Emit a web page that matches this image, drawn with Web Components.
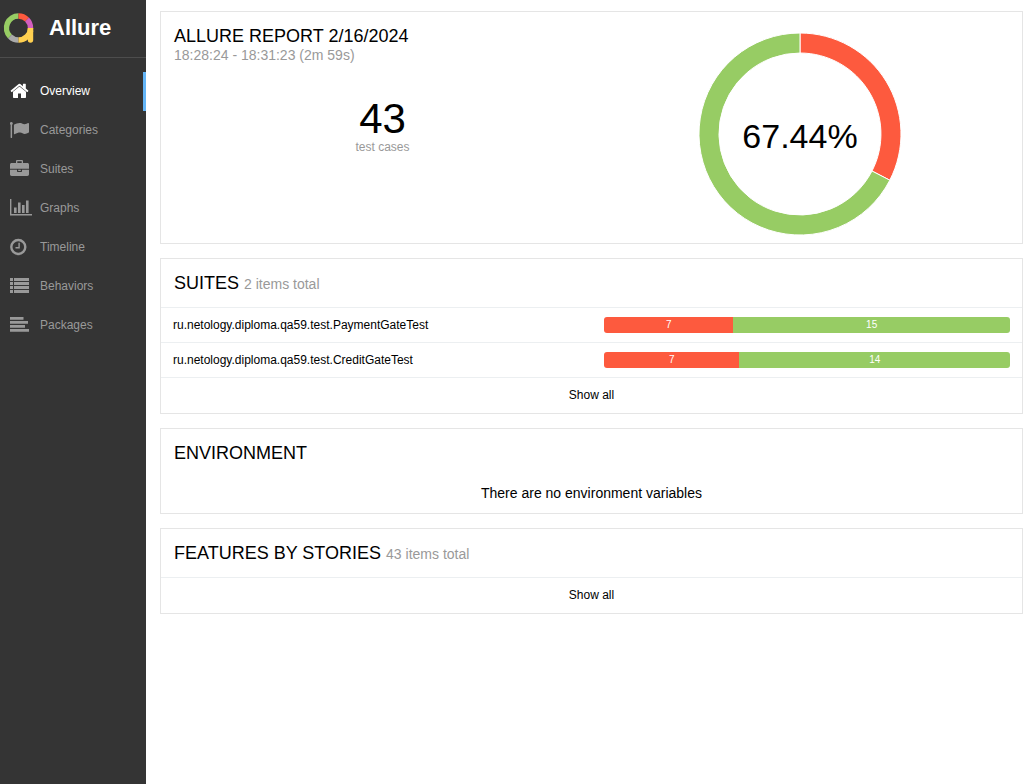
<!DOCTYPE html>
<html lang="en">
<head>
<meta charset="utf-8">
<title>Allure Report</title>
<style>
  html, body { margin: 0; }
  body { font-family: "Liberation Sans", Arial, sans-serif; font-size: 14px; color: #000; background: #fff; }
</style>
</head>
<body>
<allure-app></allure-app>

<script>
const ICONS = {
  home: '<path fill="currentColor" d="M3 9.7V15.2c0 .4.3.7.7.7H8V11.5h3v4.400h4.300c.4 0 .7-.3.7-.7V9.700L9.500 4.400zM18.200 8.600 15.800 6.600V2.200c0-.2-.2-.4-.4-.4h-2.100c-.2 0-.4.200-.4.400v2.100L10.300 2.100a1.300 1.300 0 0 0-1.600 0L.8 8.600c-.2.100-.2.400-.1.500l.7.900c.1.200.4.200.6 0l7.500-6.200 7.500 6.200c.2.200.4.100.6 0l.7-.9c.1-.1.100-.4-.1-.5z"/>',
  flag: '<path fill="currentColor" d="M2.800 2.500a1.500 1.500 0 0 1-.7 1.300V16.500c0 .2-.2.400-.4.400H1c-.2 0-.4-.2-.4-.4V3.800A1.500 1.500 0 1 1 2.800 2.500zM19 2.600v8.500c0 .4-.3.500-.6.700-1.100.6-2.300 1.100-3.600 1.100-1.800 0-2.700-1.400-4.800-1.400-1.600 0-3.600.7-5 1.500-.6.400-1.100.2-1.100-.4V4.300c0-.3.200-.5.400-.7C5.600 2.800 7.700 1.900 9.500 1.900c1.500 0 2.700.5 4 1.100.3.200.7.200 1 .2 1.300 0 3-1.300 3.700-1.300.4 0 .8.300.8.700z"/>',
  briefcase: '<path fill="currentColor" fill-rule="evenodd" d="M6 3V1.200C6 .4 6.500 0 7.200 0h4.600c.7 0 1.200.4 1.200 1.200V3h4.300c1 0 1.700.7 1.700 1.700v4.100H0V4.700C0 3.700.7 3 1.700 3zM7.300 3h4.400V1.300H7.300zM0 9.700h7v1.600c0 .4.300.7.700.7h3.600c.4 0 .7-.3.700-.7V9.700h7v4.600c0 1-.7 1.700-1.700 1.700H1.700C.7 16 0 15.300 0 14.300zM8.200 9.700h2.600v1.300H8.200z"/>',
  chart: '<path fill="currentColor" d="M0 0h1.400v15H22v1.400H0zM4 8.500h2.600V14H4zM8 3.500h2.600V14H8zM12 6h2.600v8H12zM16 1.500h2.600V14H16z"/>',
  clock: '<path fill="none" stroke="currentColor" stroke-width="2.400" d="M8.300 2a7 7 0 1 1 0 14a7 7 0 1 1 0-14z"/><path fill="none" stroke="currentColor" stroke-width="1.400" d="M9.100 4.700v5.100H5.500"/>',
  list: '<path fill="currentColor" d="M0 1h3v3H0zM4 1h15v3H4zM0 5h3v3H0zM4 5h15v3H4zM0 9h3v3H0zM4 9h15v3H4zM0 13h3v3H0zM4 13h15v3H4z"/>',
  align: '<path fill="currentColor" d="M0 1h13.500v2.700H0zM0 5h18v2.700H0zM0 9h15v2.700H0zM0 13h19v2.700H0z"/>'
};

const define = (name, html, setup) => {
  const template = document.createElement('template');
  template.innerHTML = html;
  customElements.define(name, class extends HTMLElement {
    constructor() {
      super();
      this.attachShadow({ mode: 'open' }).append(template.content.cloneNode(true));
    }
    connectedCallback() { if (setup) setup(this, this.shadowRoot); }
  });
};

define('allure-logo', `
  <style>
    :host { display: block; width: 32px; height: 32px; }
    svg { display: block; }
  </style>
  <svg width="32" height="32" viewBox="0 0 32 32" fill="none" stroke-width="5.400" aria-hidden="true">
    <path stroke="#97cc64" d="M7 24.500A12 12 0 0 1 15.500 4"/>
    <path stroke="#fd5a3e" d="M15.500 4A12 12 0 0 1 24 7.500"/>
    <path stroke="#d35ebe" d="M24 7.500A12 12 0 0 1 27.500 16"/>
    <path stroke="#aaa" d="M15.500 28A12 12 0 0 1 7 24.500"/>
    <path stroke="#ffd050" d="M27.500 16A12 12 0 0 1 15.500 28"/>
    <path stroke="#ffd050" stroke-linecap="round" d="M27.500 19V28"/>
    <path stroke="#ffd050" d="M27.500 16v4"/>
  </svg>`);

define('nav-item', `
  <style>
    :host { display: block; }
    a { display: flex; align-items: center; height: 39px; padding: 0 0 2px 10px; box-sizing: border-box;
        border-right: 3px solid transparent; color: #999; font-size: 12px; text-decoration: none; }
    :host([active]) a { color: #fff; border-color: #64b5f6; }
    svg { flex: none; width: 22px; height: 18px; margin-right: 8px; }
  </style>
  <a href="#"><svg viewBox="0 0 22 18" aria-hidden="true"></svg><slot></slot></a>`,
  (host, root) => {
    root.querySelector('svg').innerHTML = ICONS[host.getAttribute('icon')];
    if (host.hasAttribute('active')) root.querySelector('a').setAttribute('aria-current', 'page');
  });

define('side-nav', `
  <style>
    :host { display: block; background: #343434; }
    .brand { display: flex; align-items: center; gap: 14px; height: 55px; padding: 0 0 2px 3px;
             border-bottom: 1px solid #4d4d4d; color: #fff; font-size: 22px; font-weight: bold; text-decoration: none; }
    nav { padding-top: 14px; }
  </style>
  <a class="brand" href="#"><allure-logo></allure-logo><span>Allure</span></a>
  <nav aria-label="Report">
    <nav-item icon="home" active>Overview</nav-item>
    <nav-item icon="flag">Categories</nav-item>
    <nav-item icon="briefcase">Suites</nav-item>
    <nav-item icon="chart">Graphs</nav-item>
    <nav-item icon="clock">Timeline</nav-item>
    <nav-item icon="list">Behaviors</nav-item>
    <nav-item icon="align">Packages</nav-item>
  </nav>`);

define('report-card', `
  <style>
    :host { display: block; border: 1px solid #e5e5e5; }
    h2 { margin: 0; padding: 14px 13px; font-size: 18px; line-height: 20px; font-weight: normal; }
    small { font-size: 14px; line-height: 14px; color: #999; }
  </style>
  <h2><span></span> <small></small></h2>
  <slot></slot>`,
  (host, root) => {
    root.querySelector('span').textContent = host.getAttribute('heading');
    root.querySelector('small').textContent = host.getAttribute('note') || '';
  });

define('show-all', `
  <style>
    :host { display: block; border-top: 1px solid #eceff1; }
    a { display: block; font-size: 12px; line-height: 35px; text-align: center; color: #000; text-decoration: none; }
  </style>
  <a href="#">Show all</a>`);

define('suite-row', `
  <style>
    :host { display: block; border-top: 1px solid #eceff1; }
    a { display: grid; grid-template-columns: 17fr 16fr; align-items: center; height: 34px; padding: 0 12px;
        font-size: 12px; color: #000; text-decoration: none; }
    .bar { display: flex; height: 16px; border-radius: 3px; overflow: hidden;
           font-size: 10px; line-height: 16px; text-align: center; color: #fff; }
    .bar span { flex-basis: 0; }
    .failed { background: #fd5a3e; }
    .passed { background: #97cc64; }
  </style>
  <a href="#"><slot></slot><span class="bar"><span class="failed"></span><span class="passed"></span></span></a>`,
  (host, root) => {
    for (const status of ['failed', 'passed']) {
      const part = root.querySelector('.' + status);
      part.textContent = host.getAttribute(status);
      part.style.flexGrow = host.getAttribute(status);
    }
  });

define('status-donut', `
  <style>
    :host { display: block; }
    svg { display: block; margin: 0 auto; }
    text { font-size: 34px; }
  </style>
  <svg width="202" height="202" viewBox="-101 -101 202 202" role="img" aria-label="Passed tests">
    <g stroke="#fff">
      <path fill="#fd5a3e" d="M0 -101A101 101 0 0 1 89.800 46.200L72 37A81 81 0 0 0 0 -81z"/>
      <path fill="#97cc64" d="M89.800 46.200A101 101 0 1 1 0 -101V-81A81 81 0 1 0 72 37z"/>
    </g>
    <text text-anchor="middle" y="14">67.44%</text>
  </svg>`);

define('summary-card', `
  <style>
    :host { display: grid; grid-template-columns: 1fr 1fr; padding: 14px 14px 8px 13px; border: 1px solid #e5e5e5; }
    h2 { margin: 0; font-size: 18px; line-height: 20px; font-weight: normal; }
    .time { font-size: 14px; line-height: 18px; color: #999; }
    .total { margin-top: 34px; text-align: center; }
    .count { font-size: 42px; line-height: 42px; }
    .label { font-size: 12px; line-height: 14px; color: #999; }
    status-donut { padding-top: 7px; }
  </style>
  <section>
    <h2>ALLURE REPORT 2/16/2024</h2>
    <div class="time">18:28:24 - 18:31:23 (2m 59s)</div>
    <div class="total"><div class="count">43</div><div class="label">test cases</div></div>
  </section>
  <status-donut></status-donut>`);

define('allure-app', `
  <style>
    :host { display: grid; grid-template-columns: 146px 1fr; min-height: 100vh; }
    main { display: flex; flex-direction: column; gap: 14px; padding: 11px 2px 14px 14px; }
    p { margin: 0; padding: 8px 0 11px; line-height: 17px; text-align: center; }
  </style>
  <side-nav></side-nav>
  <main>
    <summary-card></summary-card>
    <report-card heading="SUITES" note="2 items total">
      <suite-row failed="7" passed="15">ru.netology.diploma.qa59.test.PaymentGateTest</suite-row>
      <suite-row failed="7" passed="14">ru.netology.diploma.qa59.test.CreditGateTest</suite-row>
      <show-all></show-all>
    </report-card>
    <report-card heading="ENVIRONMENT"><p>There are no environment variables</p></report-card>
    <report-card heading="FEATURES BY STORIES" note="43 items total"><show-all></show-all></report-card>
  </main>`);
</script>
</body>
</html>
